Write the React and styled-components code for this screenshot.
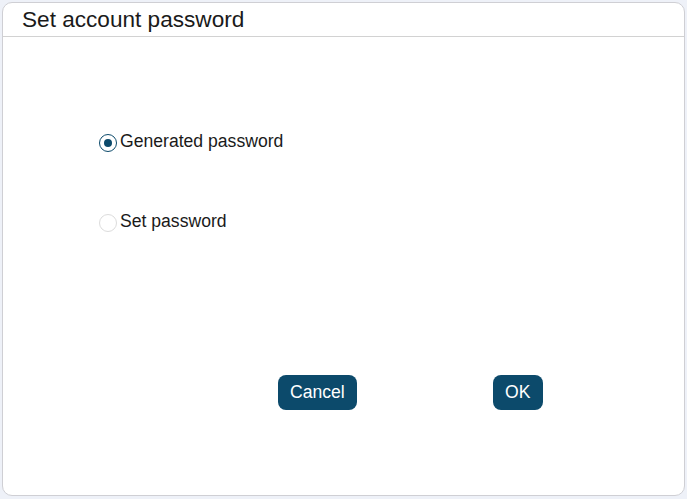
import React, { useState } from "react";
import styled, { createGlobalStyle } from "styled-components";

const GlobalStyle = createGlobalStyle`
  html, body {
    margin: 0;
    padding: 0;
    background: #eef1f8;
    font-family: "Liberation Sans", Arial, sans-serif;
  }
`;

const Page = styled.div`
  padding: 2px 2px 3px 2px;
  height: 499px;
  box-sizing: border-box;
  display: flex;
`;

const Dialog = styled.div`
  flex: 1;
  background: #ffffff;
  border: 1px solid #cfcfd4;
  border-radius: 10px;
  display: flex;
  flex-direction: column;
  overflow: hidden;
`;

const Header = styled.div`
  height: 34px;
  border-bottom: 1px solid #d2d2d2;
  display: flex;
  align-items: flex-end;
  padding: 0 0 4px 19px;
  box-sizing: border-box;
`;

const Title = styled.h1`
  margin: 0;
  font-size: 22.6px;
  font-weight: normal;
  color: #1a1a1a;
  line-height: 1;
`;

const Body = styled.div`
  flex: 1;
  display: flex;
  flex-direction: column;
`;

const Options = styled.div`
  display: flex;
  flex-direction: column;
  gap: 62px;
  padding: 95px 0 0 96px;
`;

const Option = styled.label`
  display: flex;
  align-items: center;
  font-size: 17.6px;
  color: #1a1a1a;
  cursor: pointer;
  height: 18px;
`;

const Radio = styled.span`
  width: 18px;
  height: 18px;
  box-sizing: border-box;
  border-radius: 50%;
  border: ${(p) => (p.$checked ? "1.5px solid #0c4a6b" : "1px solid #dcdcdc")};
  display: flex;
  align-items: center;
  justify-content: center;
  margin-right: 3px;
  margin-top: 3px;
  &::after {
    content: "";
    width: 8px;
    height: 8px;
    border-radius: 50%;
    background: #0c4a6b;
    display: ${(p) => (p.$checked ? "block" : "none")};
  }
`;

const Buttons = styled.div`
  display: flex;
  gap: 136px;
  padding: 0 0 0 275px;
  margin-top: 145px;
`;

const Button = styled.button`
  height: 35px;
  padding: 0 12px;
  min-width: 50px;
  border: none;
  border-radius: 8px;
  background: #0c4a6b;
  color: #ffffff;
  font-family: "Liberation Sans", Arial, sans-serif;
  font-size: 17.6px;
  cursor: pointer;
`;

export default function App() {
  const [choice, setChoice] = useState("generated");

  return (
    <>
      <GlobalStyle />
      <Page>
        <Dialog>
          <Header>
            <Title>Set account password</Title>
          </Header>
          <Body>
            <Options>
              <Option onClick={() => setChoice("generated")}>
                <Radio $checked={choice === "generated"} />
                Generated password
              </Option>
              <Option onClick={() => setChoice("set")}>
                <Radio $checked={choice === "set"} />
                Set password
              </Option>
            </Options>
            <Buttons>
              <Button>Cancel</Button>
              <Button>OK</Button>
            </Buttons>
          </Body>
        </Dialog>
      </Page>
    </>
  );
}
